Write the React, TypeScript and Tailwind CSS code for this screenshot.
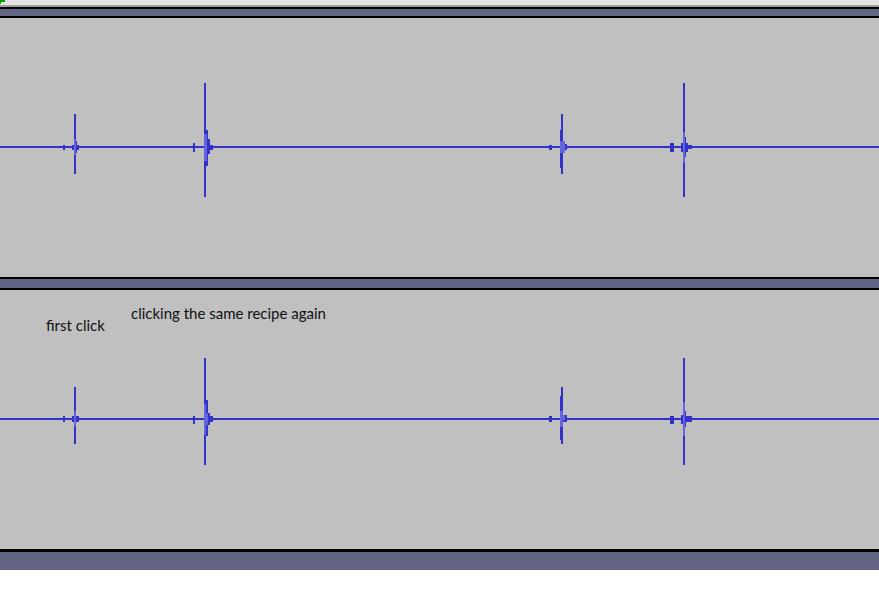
type Box = [number, number, number, number, 'd' | 'l'];

const DARK = '#3232c8';
const LIGHT = '#6464dc';

// clip rectangles per track, in track-local coordinates: x, y, w, h, tone
const upperClips: Box[] = [
  // click 1
  [63, 127, 2, 5, 'd'],
  [74, 96, 2, 60, 'd'],
  [72, 127, 7, 5, 'd'],
  [76, 123, 1, 12, 'd'],
  [74, 121, 2, 16, 'l'],
  // click 2
  [193, 125, 2, 9, 'd'],
  [204, 65, 2, 114, 'd'],
  [204, 112, 4, 36, 'd'],
  [204, 116, 3, 27, 'l'],
  [208, 121, 2, 15, 'd'],
  [210, 127, 3, 5, 'd'],
  // click 3
  [549, 127, 3, 5, 'd'],
  [561, 96, 2, 60, 'd'],
  [560, 112, 3, 38, 'd'],
  [565, 126, 2, 6, 'd'],
  [560, 123, 5, 12, 'l'],
  // click 4
  [670, 125, 4, 9, 'd'],
  [683, 65, 2, 114, 'd'],
  [681, 125, 7, 9, 'd'],
  [683, 114, 2, 31, 'l'],
  [685, 119, 1, 20, 'd'],
  [688, 127, 4, 4, 'd'],
];

const lowerClips: Box[] = [
  [63, 126, 2, 6, 'd'],
  [74, 97, 2, 57, 'd'],
  [72, 126, 7, 6, 'd'],
  [74, 121, 2, 16, 'l'],
  [193, 126, 2, 8, 'd'],
  [204, 68, 2, 107, 'd'],
  [206, 110, 2, 36, 'd'],
  [204, 114, 2, 31, 'l'],
  [204, 123, 4, 12, 'l'],
  [208, 123, 2, 12, 'd'],
  [210, 126, 3, 6, 'd'],
  [549, 126, 3, 6, 'd'],
  [561, 97, 2, 57, 'd'],
  [560, 106, 1, 44, 'd'],
  [563, 125, 4, 7, 'd'],
  [560, 121, 3, 16, 'l'],
  [563, 125, 2, 5, 'l'],
  [670, 126, 4, 8, 'd'],
  [683, 68, 2, 107, 'd'],
  [683, 112, 2, 34, 'l'],
  [681, 125, 2, 9, 'd'],
  [685, 121, 1, 16, 'd'],
  [686, 126, 6, 6, 'd'],
];

function Track({ clips, children }: { clips: Box[]; children?: React.ReactNode }) {
  return (
    <div className="relative h-[259px] bg-[#c0c0c0]">
      <svg
        width={879}
        height={259}
        viewBox="0 0 879 259"
        shapeRendering="crispEdges"
        className="block"
      >
        <rect x={0} y={128} width={879} height={2} fill={DARK} />
        {clips.map(([x, y, w, h, t], i) => (
          <rect key={i} x={x} y={y} width={w} height={h} fill={t === 'd' ? DARK : LIGHT} />
        ))}
      </svg>
      {children}
    </div>
  );
}

export default function App() {
  return (
    <div className="flex w-[879px] h-[600px] flex-col bg-white font-['Lato',sans-serif]">
      <div className="relative h-[5px] bg-[#e4e4e4]">
        <div className="absolute left-0 top-0 h-[2px] w-[5px] bg-[#00a000]" />
        <div className="absolute left-0 top-0 h-[4px] w-[1px] bg-[#00a000]" />
      </div>
      <div className="h-[2px] bg-[#a0a0a0]" />
      <div className="h-[2px] bg-black" />
      <div className="h-[7px] bg-[#626684]" />
      <div className="h-[2px] bg-black" />

      <Track clips={upperClips} />

      <div className="h-[2px] bg-black" />
      <div className="h-[9px] bg-[#626684]" />
      <div className="h-[2px] bg-black" />

      <Track clips={lowerClips}>
        <span className="absolute left-[46px] top-[28px] text-[15px] leading-none text-[#111]">
          first click
        </span>
        <span className="absolute left-[131px] top-[16px] text-[15px] leading-none text-[#111]">
          clicking the same recipe again
        </span>
      </Track>

      <div className="h-[3px] bg-black" />
      <div className="h-[18px] bg-[#626684]" />
    </div>
  );
}
